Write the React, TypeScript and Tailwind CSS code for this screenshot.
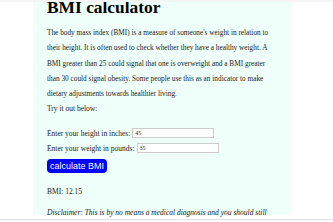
export default function App() {
  return (
    <div className="w-[333px] h-[222px] overflow-hidden bg-white flex flex-col font-['Liberation_Serif','Times_New_Roman',serif]">
      <div className="h-[2px] bg-[#f4f4f4] shrink-0" />
      <div className="flex-1 overflow-hidden">
        <div className="ml-[33px] w-[259px] h-full bg-[#effffa] px-[14px] text-[#222] text-[7.5px]">
          <h1 className="-mt-[4px] text-[17.4px] leading-[18px] font-bold text-black">BMI calculator</h1>
          <p className="mt-[9px] text-[7.3px] leading-[15.3px]">
            The body mass index (BMI) is a measure of someone's weight in relation to their height. It is often used to check
            whether they have a healthy weight. A BMI greater than 25 could signal that one is overweight and a BMI greater
            than 30 could signal obesity. Some people use this as an indicator to make dietary adjustments towards healthier
            living.
          </p>
          <p className="mt-[3px] leading-[10px]">Try it out below:</p>
          <div className="mt-[13px] flex items-center gap-[2px] h-[12px]">
            <span>Enter your height in inches:</span>
            <input readOnly value="45" className="w-[82px] h-[10px] border border-[#ccc] bg-white px-[2px] text-[6px] outline-none" />
          </div>
          <div className="mt-[3px] flex items-center gap-[2px] h-[12px]">
            <span>Enter your weight in pounds:</span>
            <input readOnly value="35" className="w-[82px] h-[10px] border border-[#ccc] bg-white px-[2px] text-[6px] outline-none" />
          </div>
          <button className="mt-[5px] w-[60px] h-[14px] rounded-[4px] bg-[#0000ff] text-white text-[9px] leading-[14px] font-['Liberation_Sans',Arial,sans-serif]">
            calculate BMI
          </button>
          <p className="mt-[14px] leading-[10px]">BMI: 12.15</p>
          <p className="mt-[11px] leading-[10px] italic">
            Disclaimer: This is by no means a medical diagnosis and you should still
          </p>
        </div>
      </div>
      <div className="h-[1px] bg-[#e2e2e2] shrink-0" />
      <div className="h-[2px] bg-white shrink-0" />
    </div>
  );
}
